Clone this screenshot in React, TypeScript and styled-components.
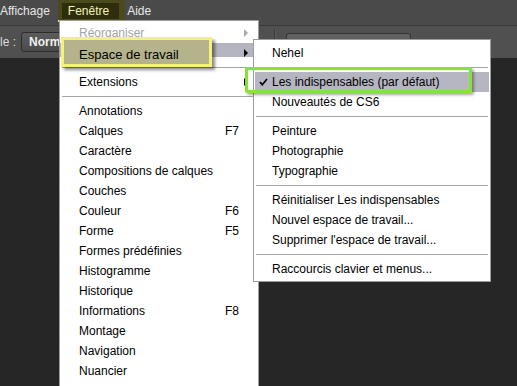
import React from 'react';
import styled, {createGlobalStyle} from 'styled-components';

const GlobalStyle = createGlobalStyle`
  html, body {
    margin: 0;
    padding: 0;
    background: #262626;
    overflow: hidden;
  }
`;

const Screen = styled.div`
  position: relative;
  width: 517px;
  height: 386px;
  overflow: hidden;
  display: flex;
  flex-direction: column;
  background: #262626;
  font-family: 'Liberation Sans', Arial, sans-serif;
  font-size: 12px;
`;

const MenuBar = styled.div`
  height: 25px;
  display: flex;
  align-items: flex-start;
  background: #4a4a4a;
  border-bottom: 1px solid #3b3b3b;
  color: #e8e8e8;
`;

const MenuTitle = styled.div`
  height: 22px;
  line-height: 22px;
  margin-right: 8px;
`;

const ActiveTitle = styled.div`
  box-sizing: border-box;
  height: 22px;
  padding: 3px 6px 0 4px;
  margin-right: 2px;
  background: #4b4a1d;
  border-bottom: 2px solid #e9e985;
`;

const ActiveLabel = styled.div`
  height: 16px;
  line-height: 16px;
  padding: 0 10px 0 6px;
  background: #2e2e0f;
  color: #f4f4b2;
`;

const OptionsBar = styled.div`
  height: 32px;
  display: flex;
  align-items: center;
  background: #505050;
  color: #dcdcdc;
`;

const OptLabel = styled.span`
  white-space: nowrap;
`;

const Dropdown = styled.div`
  box-sizing: border-box;
  width: 64px;
  height: 20px;
  margin-left: 5px;
  padding-left: 7px;
  line-height: 18px;
  border: 1px solid #2c2c2c;
  border-radius: 3px;
  background: linear-gradient(#5c5c5c, #4b4b4b);
  color: #f0f0f0;
  font-weight: bold;
`;

const OptDivider = styled.div`
  width: 1px;
  height: 24px;
  margin-left: 189px;
  background: #363636;
  box-shadow: 1px 0 #5e5e5e;
`;

const OptButton = styled.div`
  box-sizing: border-box;
  align-self: flex-start;
  width: 125px;
  height: 22px;
  margin: 7px 0 0 11px;
  border: 1px solid #333;
  border-radius: 3px;
  background: linear-gradient(#626262, #555);
`;

const Workspace = styled.div`
  flex: 1;
  background: #262626;
`;

const MainMenu = styled.div`
  position: absolute;
  left: 59px;
  top: 20px;
  width: 200px;
  box-sizing: border-box;
  padding-top: 2px;
  background: #fff;
  border: 1px solid #9c9c9c;
  color: #000;
`;

const SubMenu = styled.div`
  position: absolute;
  left: 253px;
  top: 39px;
  width: 238px;
  box-sizing: border-box;
  padding: 3px 0 2px;
  background: #fff;
  border: 1px solid #9c9c9c;
  color: #000;
`;

const MenuRow = styled.div<{$disabled?: boolean; $active?: boolean}>`
  position: relative;
  display: flex;
  align-items: center;
  height: 20px;
  padding: 0 19px;
  white-space: nowrap;
  color: ${({$disabled}) => ($disabled ? '#a3a3a3' : '#000')};
  background: ${({$active}) =>
    $active ? 'linear-gradient(#b5b5c1 14px, transparent 14px)' : 'transparent'};
`;

const SubRow = styled.div<{$active?: boolean}>`
  position: relative;
  display: flex;
  align-items: center;
  height: 20px;
  margin: 0 1px;
  padding: 0 19px 0 4px;
  white-space: nowrap;
  background: ${({$active}) => ($active ? '#b6b6c2' : 'transparent')};
`;

const CheckSlot = styled.span`
  display: flex;
  align-items: center;
  width: 13px;
  flex: none;
`;

const Shortcut = styled.span`
  margin-left: auto;
`;

const Arrow = styled.span<{$disabled?: boolean}>`
  margin-left: auto;
  margin-right: -9px;
  width: 0;
  height: 0;
  border-left: 4px solid ${({$disabled}) => ($disabled ? '#a8a8a8' : '#000')};
  border-top: 4px solid transparent;
  border-bottom: 4px solid transparent;
`;

const Separator = styled.div`
  height: 9px;
  display: flex;
  align-items: center;
  padding: 0 2px;

  &::after {
    content: '';
    flex: 1;
    height: 1px;
    background: #a6a6a6;
  }
`;

// annotation boxes drawn over the screenshot, placed on their row
const YellowMark = styled.div`
  position: absolute;
  left: 1px;
  top: -6px;
  width: 151px;
  height: 30px;
  box-sizing: border-box;
  display: flex;
  align-items: center;
  padding: 4px 0 0 15px;
  border: 3px solid #f3f37c;
  background: #b4b38b;
  box-shadow: 3px 3px 3px rgba(0, 0, 0, 0.45);
  color: #000;
  font-size: 13px;
  white-space: nowrap;
`;

const GreenMark = styled.div`
  position: absolute;
  left: -10px;
  top: -5px;
  width: 227px;
  height: 26px;
  box-sizing: border-box;
  border: 3px solid #87e03b;
  border-radius: 2px;
  box-shadow: 2px 2px 3px rgba(0, 0, 0, 0.35), inset 0 0 2px rgba(160, 240, 90, 0.6);
`;

type MainItem =
  | {sep: true}
  | {label: string; key?: string; sub?: boolean; disabled?: boolean; active?: boolean; sep?: false};

const mainItems: MainItem[] = [
  {label: 'Réorganiser', sub: true, disabled: true},
  {label: 'Espace de travail', sub: true, active: true},
  {sep: true},
  {label: 'Extensions', sub: true},
  {sep: true},
  {label: 'Annotations'},
  {label: 'Calques', key: 'F7'},
  {label: 'Caractère'},
  {label: 'Compositions de calques'},
  {label: 'Couches'},
  {label: 'Couleur', key: 'F6'},
  {label: 'Forme', key: 'F5'},
  {label: 'Formes prédéfinies'},
  {label: 'Histogramme'},
  {label: 'Historique'},
  {label: 'Informations', key: 'F8'},
  {label: 'Montage'},
  {label: 'Navigation'},
  {label: 'Nuancier'},
  {label: 'Outils prédéfinis'},
];

type SubItem = {sep: true} | {label: string; checked?: boolean; sep?: false};

const subItems: SubItem[] = [
  {label: 'Nehel'},
  {sep: true},
  {label: 'Les indispensables (par défaut)', checked: true},
  {label: 'Nouveautés de CS6'},
  {sep: true},
  {label: 'Peinture'},
  {label: 'Photographie'},
  {label: 'Typographie'},
  {sep: true},
  {label: 'Réinitialiser Les indispensables'},
  {label: 'Nouvel espace de travail...'},
  {label: "Supprimer l'espace de travail..."},
  {sep: true},
  {label: 'Raccourcis clavier et menus...'},
];

const CheckIcon = () => (
  <svg width="9" height="8" viewBox="0 0 9 8">
    <polyline points="1,4 3.3,6.8 8,1" fill="none" stroke="#000" strokeWidth="1.7" />
  </svg>
);

const App: React.FC = () => {
  return (
    <Screen>
      <GlobalStyle />
      <MenuBar>
        <MenuTitle>Affichage</MenuTitle>
        <ActiveTitle>
          <ActiveLabel>Fenêtre</ActiveLabel>
        </ActiveTitle>
        <MenuTitle>Aide</MenuTitle>
      </MenuBar>
      <OptionsBar>
        <OptLabel>le :</OptLabel>
        <Dropdown>Normal</Dropdown>
        <OptDivider />
        <OptButton />
      </OptionsBar>
      <Workspace />

      <MainMenu>
        {mainItems.map((item, i) =>
          item.sep ? (
            <Separator key={i} />
          ) : (
            <MenuRow key={i} $disabled={item.disabled} $active={item.active}>
              {item.active ? <YellowMark>{item.label}</YellowMark> : item.label}
              {item.key && <Shortcut>{item.key}</Shortcut>}
              {item.sub && <Arrow $disabled={item.disabled} />}
            </MenuRow>
          )
        )}
      </MainMenu>

      <SubMenu>
        {subItems.map((item, i) =>
          item.sep ? (
            <Separator key={i} />
          ) : (
            <SubRow key={i} $active={item.checked}>
              {item.checked && <GreenMark />}
              <CheckSlot>{item.checked && <CheckIcon />}</CheckSlot>
              {item.label}
            </SubRow>
          )
        )}
      </SubMenu>
    </Screen>
  );
};

export default App;
